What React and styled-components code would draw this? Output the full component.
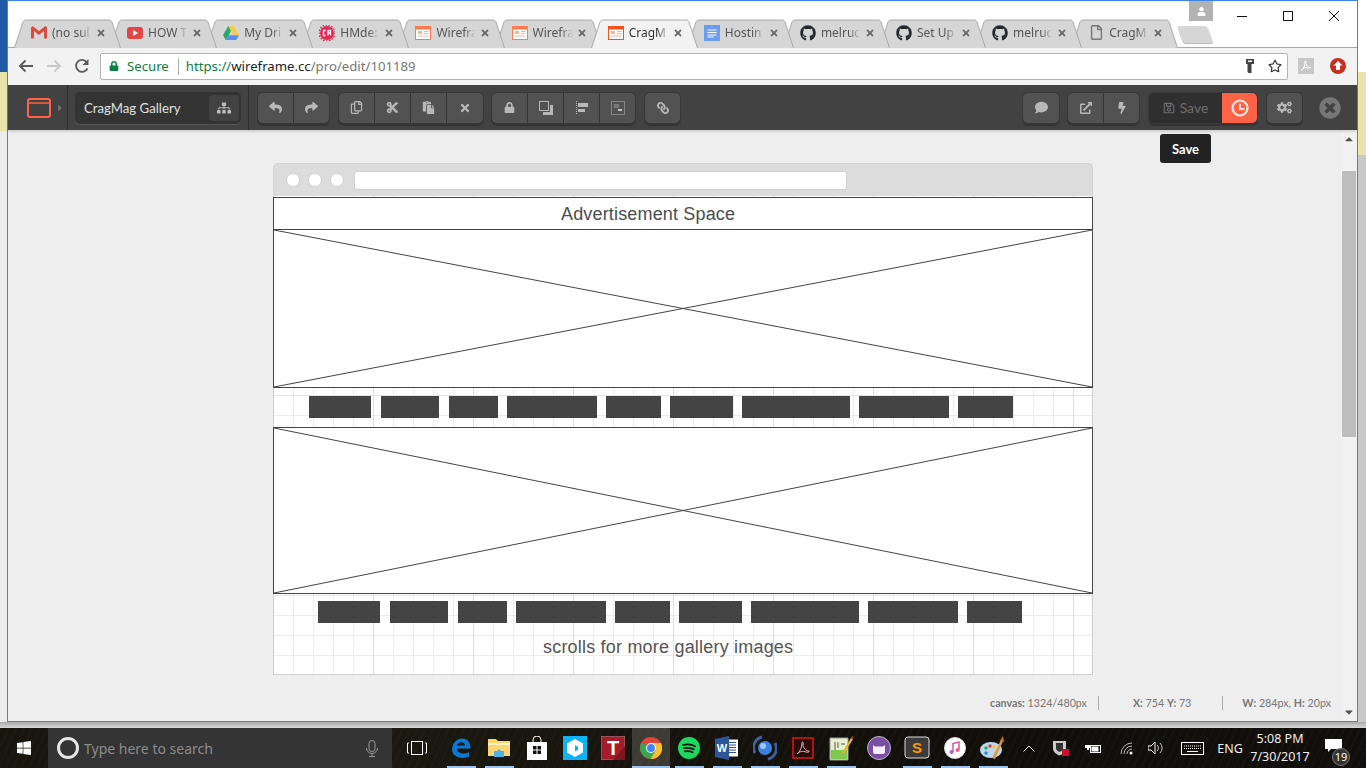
import React from 'react';
import styled, { createGlobalStyle } from 'styled-components';
import {
  FaReply, FaShare, FaRegCopy, FaCut, FaPaste, FaTimes, FaLock, FaLink, FaComment,
  FaExternalLinkAlt, FaBolt, FaRegSave, FaCogs, FaTimesCircle, FaSitemap,
  FaGithub, FaRegFile, FaRegStar, FaUser, FaWindows, FaCaretRight,
  FaCaretUp, FaCaretDown,
} from 'react-icons/fa';

const GlobalStyle = createGlobalStyle`
  html, body { margin: 0; padding: 0; width: 1366px; height: 768px; overflow: hidden; }
  body { font-family: "Noto Sans", "Liberation Sans", sans-serif; }
  * { box-sizing: border-box; }
`;

const Desktop = styled.div`
  width: 1366px;
  height: 768px;
  display: flex;
  flex-direction: column;
  background:
    linear-gradient(#2059a5 0 72px, #e8e4aa 72px 131px, #ececec 131px) left top / 7px 100% no-repeat,
    linear-gradient(#ffffff 0 72px, #e8e4aa 72px 155px, #c8c8c8 155px) right top / 8px 100% no-repeat,
    #ececec;
`;

const Window = styled.div`
  margin-left: 7px;
  width: 1351px;
  height: 722px;
  flex: none;
  display: flex;
  flex-direction: column;
  border: 1px solid #3b84e6;
  background: #fff;
`;

const Shade = styled.div`
  height: 6px;
  flex: none;
  background: linear-gradient(#a9a9a9, #d8d8d8);
`;

/* browser chrome */
const TabStrip = styled.div`
  position: relative;
  height: 47px;
  flex: none;
  background: #fff;
  border-bottom: 1px solid #a9a9a9;
  padding: 18px 0 0 6px;
  display: flex;
`;

const TabWrap = styled.div`
  position: relative;
  flex: none;
  width: 106px;
  height: 29px;
  margin-right: -9.9px;
  padding: 0 0 2px 17px;
  display: flex;
  align-items: center;
  z-index: ${(p) => p.$z};
  font-size: 12px;
  color: ${(p) => (p.$active ? '#333' : '#555')};
`;

const TabShape = styled.svg`
  position: absolute;
  left: 0;
  top: 0;
  width: 110px;
  height: 30px;
  z-index: -1;
`;

const Favicon = styled.span`
  flex: none;
  width: 16px;
  height: 16px;
  display: flex;
  align-items: center;
  justify-content: center;
  color: #24292e;
`;

const TabTitle = styled.span`
  flex: none;
  width: 40px;
  margin-left: 5px;
  overflow: hidden;
  white-space: nowrap;
  -webkit-mask-image: linear-gradient(90deg, #000 70%, transparent);
  mask-image: linear-gradient(90deg, #000 70%, transparent);
`;

const TabClose = styled.span`
  flex: none;
  margin-left: 4px;
  display: flex;
  color: #666;
`;

const NewTab = styled.div`
  flex: none;
  width: 30px;
  height: 17px;
  margin: 7px 0 0 13px;
  background: #d6d6d6;
  border-radius: 2px;
  transform: skewX(20deg);
  box-shadow: 0 1px 0 #bbb;
`;

const Caption = styled.div`
  position: absolute;
  right: 0;
  top: 0;
  display: flex;
`;

const ProfileBadge = styled.div`
  width: 24px;
  height: 20px;
  margin-right: 6px;
  background: #b2b2b2;
  color: #fff;
  display: flex;
  align-items: center;
  justify-content: center;
`;

const CaptionBtn = styled.div`
  width: 46px;
  height: 30px;
  display: flex;
  align-items: center;
  justify-content: center;
`;

const Omnibar = styled.div`
  height: 37px;
  flex: none;
  background: #f2f2f2;
  display: flex;
  align-items: center;
  padding: 0 0 1px 4px;
`;

const NavBtn = styled.span`
  flex: none;
  width: 28px;
  display: flex;
  justify-content: center;
`;

const Address = styled.div`
  flex: none;
  width: 1188px;
  height: 27px;
  margin: 0 2px 0 4px;
  background: #fff;
  border: 1px solid #b4b4b4;
  border-radius: 2px;
  display: flex;
  align-items: center;
  padding: 0 5px 0 8px;
  font-size: 13.2px;
`;

const Secure = styled.span`
  color: #0b8043;
  margin-left: 8px;
  padding-right: 9px;
  border-right: 1px solid #aaa;
  line-height: 17px;
`;

const Url = styled.span`
  margin-left: 7px;
  color: #777;
  b { font-weight: 400; color: #222; }
  i { font-style: normal; color: #0b8043; }
`;

const AddressEnd = styled.span`
  margin-left: auto;
  display: flex;
  align-items: center;
  gap: 14px;
`;

const ExtBtn = styled.span`
  flex: none;
  width: 32px;
  display: flex;
  justify-content: center;
`;

/* wireframe.cc toolbar */
const EditorBar = styled.div`
  height: 45px;
  flex: none;
  background: #424242;
  box-shadow: 0 2px 2px rgba(0, 0, 0, 0.12);
  position: relative;
  z-index: 2;
  display: flex;
  align-items: center;
  font-family: Lato, "Noto Sans", sans-serif;
`;

const LogoCell = styled.div`
  width: 60px;
  height: 100%;
  flex: none;
  border-right: 1px solid #2e2e2e;
  display: flex;
  align-items: center;
  padding-left: 19px;
  gap: 4px;
  color: #777;
`;

const LogoMark = styled.svg`
  flex: none;
`;

const TitleCell = styled.div`
  width: 181px;
  height: 100%;
  flex: none;
  border-right: 1px solid #2e2e2e;
  padding: 7px 7px;
  margin-right: 9px;
`;

const TitleBox = styled.div`
  height: 32px;
  background: #333;
  border-radius: 5px;
  box-shadow: 0 1px 0 #555;
  display: flex;
  align-items: center;
  justify-content: space-between;
  padding: 0 2px 0 9px;
  color: #e0e0e0;
  font-size: 13.2px;
`;

const MiniBtn = styled.span`
  width: 30px;
  height: 26px;
  background: #424242;
  border-radius: 4px;
  color: #bbb;
  display: flex;
  align-items: center;
  justify-content: center;
`;

const Group = styled.div`
  display: flex;
  flex: none;
  margin-right: ${(p) => p.$gap ?? 10}px;
  border-radius: 5px;
  overflow: hidden;
  height: 30px;
  box-shadow: 0 0 0 1px #383838, 0 2px 0 1px #353535;
`;

const Btn = styled.span`
  width: ${(p) => p.$w || 36}px;
  height: 100%;
  background: #525252;
  border-right: 1px solid #353535;
  color: #b8b8b8;
  display: flex;
  align-items: center;
  justify-content: center;
  &:last-child { border-right: 0; }
`;

const ChainIcon = styled(FaLink)`
  transform: scaleX(-1);
`;

const RightTools = styled.div`
  margin-left: auto;
  display: flex;
  align-items: center;
`;

const SaveBtn = styled.span`
  width: 73px;
  height: 100%;
  background: #2f2f2f;
  color: #6e6e6e;
  font-size: 14px;
  display: flex;
  align-items: center;
  justify-content: center;
  gap: 5px;
`;

const ClockBtn = styled.span`
  width: 35px;
  height: 100%;
  background: #ff6347;
  display: flex;
  align-items: center;
  justify-content: center;
`;

const CloseEditor = styled.span`
  width: 22px;
  height: 22px;
  margin: 0 16px 0 17px;
  color: #777;
  display: flex;
  align-items: center;
  justify-content: center;
`;

const Tooltip = styled.div`
  position: absolute;
  left: 1152px;
  top: 4px;
  width: 51px;
  height: 29px;
  background: #222;
  color: #fff;
  border-radius: 3px;
  font: 700 13px Lato, sans-serif;
  display: flex;
  align-items: center;
  justify-content: center;
`;

/* canvas */
const Workspace = styled.div`
  position: relative;
  flex: 1;
  min-height: 0;
  display: flex;
  background: #eee;
`;

const CanvasArea = styled.div`
  flex: 1;
  display: flex;
  flex-direction: column;
  padding: 33px 0 0 265px;
`;

const Mock = styled.div`
  width: 820px;
  flex: none;
`;

const BrowserBar = styled.div`
  height: 33px;
  background: #dcdcdc;
  border: 1px solid #d2d2d2;
  border-bottom: 0;
  border-radius: 5px 5px 0 0;
  display: flex;
  align-items: center;
  padding: 0 0 0 12px;
`;

const Dot = styled.span`
  width: 14px;
  height: 14px;
  margin-right: 8px;
  border-radius: 50%;
  background: #fff;
  border: 1px solid #d0d0d0;
`;

const MockUrl = styled.span`
  width: 493px;
  height: 19px;
  margin-left: 2px;
  background: #fff;
  border: 1px solid #d0d0d0;
  border-radius: 3px;
`;

const Paper = styled.div`
  height: 479px;
  border: 1px solid #cfcfcf;
  border-top: 0;
  background-color: #fff;
  background-image:
    linear-gradient(90deg, transparent 99px, #dedede 99px),
    linear-gradient(transparent 99px, #e4e4e4 99px),
    linear-gradient(90deg, transparent 19px, #ececec 19px),
    linear-gradient(transparent 19px, #ececec 19px);
  background-size: 100px 100px, 100px 100px, 20px 20px, 20px 20px;
  display: flex;
  flex-direction: column;
`;

const AdBanner = styled.div`
  height: 33px;
  margin: 1px -1px 0;
  background: #fff;
  border: 1px solid #444;
  padding-left: 287px;
  font: 18px/32px "Liberation Sans", Arial, sans-serif;
  letter-spacing: 0.16px;
  color: #4c4c4c;
`;

const Placeholder = styled.div`
  height: ${(p) => p.$h}px;
  margin: ${(p) => (p.$flush ? '-1px' : '0')} -1px 0;
  background: #fff;
  border: 1px solid #444;
  flex: none;
  svg { display: block; width: 100%; height: 100%; }
`;

const NavRow = styled.div`
  height: 39px;
  flex: none;
  display: flex;
  align-items: flex-start;
  padding: ${(p) => p.$top}px 0 0 ${(p) => p.$left}px;
`;

const NavItem = styled.span`
  height: 22px;
  flex: none;
  background: #444;
  width: ${(p) => p.$w}px;
  margin-right: ${(p) => p.$gap}px;
`;

const ScrollNote = styled.div`
  font: 18px "Liberation Sans", Arial, sans-serif;
  letter-spacing: 0.2px;
  color: #555;
  padding-left: 269px;
  margin-top: 4px;
`;

const StatusBar = styled.div`
  margin: 21px 0 0 -265px;
  padding-right: 10px;
  display: flex;
  justify-content: flex-end;
  align-items: center;
  font: 10.7px Lato, "Noto Sans", sans-serif;
  color: #777;
  b { font-weight: 700; }
`;

const StatusCell = styled.span`
  padding-left: ${(p) => p.$pl}px;
  padding-right: ${(p) => p.$pr}px;
  border-right: ${(p) => (p.$end ? '0' : '1px solid #aaa')};
  line-height: 14px;
`;

const ScrollBar = styled.div`
  width: 16px;
  flex: none;
  background: #f1f1f1;
  color: #505050;
  display: flex;
  flex-direction: column;
  align-items: center;
  justify-content: space-between;
  padding: 3px 0;
  position: relative;
`;

const Thumb = styled.div`
  position: absolute;
  left: 1px;
  top: 41px;
  width: 14px;
  height: 266px;
  background: #bdbdbd;
`;

/* taskbar */
const Taskbar = styled.div`
  height: 40px;
  flex: none;
  display: flex;
  align-items: stretch;
  color: #fff;
  background:
    repeating-linear-gradient(115deg, rgba(90, 80, 50, 0.07) 0 2px, transparent 2px 7px),
    radial-gradient(circle at 20% 60%, #1d1a0f, transparent 60%),
    #110f0b;
`;

const StartBtn = styled.div`
  width: 48px;
  flex: none;
  display: flex;
  align-items: center;
  justify-content: center;
`;

const SearchBox = styled.div`
  width: 344px;
  flex: none;
  background: #343434;
  display: flex;
  align-items: center;
  padding: 0 14px 0 9px;
  color: #8c8c8c;
  font-size: 14px;
`;

const Cortana = styled.span`
  width: 22px;
  height: 22px;
  border-radius: 50%;
  border: 3px solid #e6e6e6;
  margin-right: 5px;
  flex: none;
`;

const MicIcon = styled.svg`
  margin-left: auto;
`;

const TaskView = styled.div`
  width: 50px;
  flex: none;
  display: flex;
  align-items: center;
  justify-content: center;
`;

const AppSlot = styled.div`
  width: 38px;
  flex: none;
  position: relative;
  display: flex;
  align-items: center;
  justify-content: center;
  background: ${(p) => (p.$focused ? 'rgba(255,255,255,0.17)' : 'transparent')};
  &::after {
    content: '';
    display: ${(p) => (p.$running ? 'block' : 'none')};
    position: absolute;
    bottom: 0;
    left: ${(p) => (p.$focused ? '0' : '5px')};
    right: ${(p) => (p.$focused ? '0' : '4px')};
    height: 2px;
    background: #9cc4ee;
  }
`;

const Tray = styled.div`
  display: flex;
  margin-left: -2px;
`;

const TraySlot = styled.div`
  width: ${(p) => p.$w}px;
  flex: none;
  display: flex;
  align-items: center;
  justify-content: center;
  font-size: 12.5px;
  color: #eee;
`;

const Clock = styled.div`
  width: 68px;
  flex: none;
  font-size: 12.5px;
  line-height: 18px;
  text-align: center;
  padding-top: 2px;
  color: #eee;
`;

const NotifyWrap = styled.div`
  width: 38px;
  flex: none;
  position: relative;
  display: flex;
  align-items: center;
  justify-content: center;
`;

const NotifyBubble = styled.svg`
  margin-top: -4px;
`;

const NotifyCount = styled.span`
  position: absolute;
  left: 18px;
  top: 20px;
  width: 18px;
  height: 18px;
  border-radius: 50%;
  background: #333;
  border: 1px solid #777;
  font-size: 11px;
  line-height: 16px;
  text-align: center;
  color: #fff;
`;

const GmailIcon = () => (
  <svg width="16" height="13" viewBox="0 0 16 13">
    <path d="M0 1.500v11h3V5l5 4 5-4v7.500h3v-11L14.500 0 8 5 1.500 0z" fill="#db4c3f" />
  </svg>
);

const YouTubeIcon = () => (
  <svg width="16" height="12" viewBox="0 0 16 12">
    <rect width="16" height="12" rx="3" fill="#e04646" />
    <path d="M6 3l5 3-5 3z" fill="#fff" />
  </svg>
);

const DriveIcon = () => (
  <svg width="16" height="14" viewBox="0 0 16 14">
    <path d="M5.300 0h5.400l5.300 9h-5.400z" fill="#f7cc45" />
    <path d="M5.300 0L0 9l2.700 5 5.300-9z" fill="#2aa866" />
    <path d="M5 9.300h11L13.300 14H2.700z" fill="#5b8def" />
  </svg>
);

const BurstIcon = () => (
  <svg width="16" height="16" viewBox="0 0 16 16">
    <circle cx="8" cy="8" r="7" fill="#e2264f" />
    <circle cx="8" cy="8" r="8" fill="none" stroke="#e2264f" strokeWidth="1.500" strokeDasharray="1.500 1.500" />
    <path d="M6.800 5.500H4.500v5h2.300M9 10.500V5.500h2.500v5M9 8h2.500" fill="none" stroke="#fff" strokeWidth="1.300" />
  </svg>
);

const WireframeIcon = ({ strong }) => (
  <svg width="16" height="14" viewBox="0 0 16 14">
    <rect x=".5" y=".5" width="15" height="13" fill="#fff" stroke={strong ? '#f4511e' : '#ff7a4d'} />
    <rect x="1" y="1" width="14" height="2.500" fill={strong ? '#f4511e' : '#ff7a4d'} />
    <rect x="3" y="5" width="4" height="3" fill="#ffb299" />
    <path d="M9 5.500h4.500M9 7.500h4.500M3 10h10.500" stroke="#ffb299" />
  </svg>
);

const DocsIcon = () => (
  <svg width="16" height="16" viewBox="0 0 16 16">
    <rect width="16" height="16" fill="#6a9cf2" />
    <path d="M3.500 5h9M3.500 7.500h9M3.500 10h9M3.500 12h6" stroke="#fff" />
  </svg>
);

const closeX = <FaTimes size={10} />;

const tabs = [
  { icon: <GmailIcon />, title: '(no sul' },
  { icon: <YouTubeIcon />, title: 'HOW T' },
  { icon: <DriveIcon />, title: 'My Dri' },
  { icon: <BurstIcon />, title: 'HMde:' },
  { icon: <WireframeIcon />, title: 'Wirefra' },
  { icon: <WireframeIcon />, title: 'Wirefra' },
  { icon: <WireframeIcon strong />, title: 'CragM', active: true },
  { icon: <DocsIcon />, title: 'Hostin' },
  { icon: <FaGithub size={16} />, title: 'melruc' },
  { icon: <FaGithub size={16} />, title: 'Set Up' },
  { icon: <FaGithub size={16} />, title: 'melruc' },
  { icon: <FaRegFile size={15} color="#777" />, title: 'CragM' },
];

const ArrangeIcon = ({ kind }) => {
  if (kind === 'front') {
    return (
      <svg width="14" height="14" viewBox="0 0 14 14">
        <rect x=".5" y=".5" width="9" height="9" fill="none" stroke="#b8b8b8" />
        <path d="M11 4h3v10H4v-3h7z" fill="#b8b8b8" />
      </svg>
    );
  }
  if (kind === 'align') {
    return (
      <svg width="12" height="14" viewBox="0 0 12 14">
        <path d="M.5 0v14" stroke="#b8b8b8" strokeDasharray="1 1" />
        <rect x="2" y="2" width="10" height="4" fill="#b8b8b8" />
        <rect x="2" y="8" width="7" height="3" fill="#b8b8b8" />
      </svg>
    );
  }
  return (
    <svg width="14" height="14" viewBox="0 0 14 14">
      <rect x=".5" y=".5" width="13" height="13" fill="none" stroke="#b8b8b8" strokeDasharray="1 1" />
      <rect x="3" y="3" width="5" height="4" fill="#7a7a7a" />
      <rect x="7" y="8" width="4" height="2" fill="#c4c4c4" />
    </svg>
  );
};

const CrossedBox = () => (
  <svg viewBox="0 0 100 100" preserveAspectRatio="none">
    <path d="M0 0L100 100M100 0L0 100" stroke="#444" strokeWidth="1" vectorEffect="non-scaling-stroke" fill="none" />
  </svg>
);

const navItems = [
  { w: 62, gap: 10 }, { w: 58, gap: 10 }, { w: 49, gap: 9 }, { w: 90, gap: 9 }, { w: 55, gap: 9 },
  { w: 63, gap: 9 }, { w: 108, gap: 9 }, { w: 90, gap: 9 }, { w: 55, gap: 0 },
];

const EdgeIcon = () => (
  <svg width="22" height="22" viewBox="0 0 22 22">
    <path d="M2 13C2 5 8 1.500 12 1.500c5.500 0 8.500 4 8.500 10H7c0 5 7 6.500 12 3.500v4.500c-6 3-16 1.500-17-6.500zM7 8.500h8C15 4 8 4 7 8.500z" fill="#0a78d7" />
  </svg>
);

const ExplorerIcon = () => (
  <svg width="22" height="20" viewBox="0 0 22 20">
    <path d="M0 1h8l2 2h12v15H0z" fill="#fbd774" />
    <path d="M0 5h22v2H0z" fill="#fff3c4" />
    <path d="M6 19v-6h3l2-2 2 2h3v6z" fill="#4fb3e8" />
  </svg>
);

const StoreIcon = () => (
  <svg width="22" height="24" viewBox="0 0 22 24">
    <path d="M7 6V4a4 4 0 018 0v2" fill="none" stroke="#fff" />
    <path d="M1 6h20v18H1z" fill="#fff" />
    <path d="M7 10h3.500v3.500H7zM11.500 10H15v3.500h-3.500zM7 14.500h3.500V18H7zM11.500 14.500H15V18h-3.500z" fill="#111" />
  </svg>
);

const BoxIcon = () => (
  <svg width="24" height="24" viewBox="0 0 24 24">
    <rect width="24" height="24" fill="#0db3f3" />
    <path d="M12 3l8 4.500v9L12 21l-8-4.500v-9z" fill="#fff" />
    <path d="M12 9l3 1.700v3L12 15.500z" fill="#0db3f3" />
  </svg>
);

const LetterT = () => (
  <svg width="24" height="24" viewBox="0 0 24 24">
    <rect width="24" height="24" fill="#a51d2d" stroke="#888" />
    <path d="M24 10v14H12z" fill="#7c1622" />
    <text x="12" y="19" textAnchor="middle" fontSize="20" fontWeight="700" fontFamily="Liberation Sans" fill="#fff">T</text>
  </svg>
);

const ChromeIcon = () => (
  <svg width="22" height="22" viewBox="0 0 22 22">
    <circle cx="11" cy="11" r="11" fill="#e0453a" />
    <path d="M11 11L1.500 5.500A11 11 0 000 11a11 11 0 0010.500 11L16 13z" fill="#34a853" />
    <path d="M11 6h10a11 11 0 01-10.500 16L16 13z" fill="#fbc02d" />
    <circle cx="11" cy="11" r="5" fill="#fff" />
    <circle cx="11" cy="11" r="4" fill="#4285f4" />
  </svg>
);

const SpotifyIcon = () => (
  <svg width="22" height="22" viewBox="0 0 22 22">
    <circle cx="11" cy="11" r="11" fill="#1ed760" />
    <path d="M5 8c4-1 8.500-.8 12 1.300M6 11.300c3.500-.9 7-.6 10 1.100M6.800 14.400c2.800-.7 5.400-.4 7.800.9" fill="none" stroke="#111" strokeWidth="1.700" strokeLinecap="round" />
  </svg>
);

const WordIcon = () => (
  <svg width="24" height="24" viewBox="0 0 24 24">
    <rect x="10" y="3.500" width="13" height="17" fill="#fff" />
    <path d="M13 6.500h8M13 9h8M13 11.500h8M13 14h8M13 16.500h8" stroke="#2b579a" />
    <path d="M0 3l14-3v24L0 21z" fill="#2b579a" />
    <text x="7" y="16" textAnchor="middle" fontSize="11" fontWeight="700" fontFamily="Liberation Sans" fill="#fff">W</text>
  </svg>
);

const GlobeIcon = () => (
  <svg width="24" height="26" viewBox="0 0 24 26">
    <circle cx="12" cy="13" r="7" fill="#3b82dc" />
    <circle cx="10" cy="11" r="3" fill="#9cc8f5" />
    <path d="M9 2A11 11 0 002 18M15 24A11 11 0 0022 8" fill="none" stroke="#3f5f9e" strokeWidth="3" />
  </svg>
);

const AcrobatIcon = () => (
  <svg width="22" height="22" viewBox="0 0 22 22">
    <rect x="1" y="1" width="20" height="20" fill="#2a0a0a" stroke="#d41c10" strokeWidth="1.500" />
    <path d="M5 17c3-2 5-7 5-11 0-2 2-1 1 2 0 3 3 6 6 6 1 1-1 1.500-3 1-3-1-6-1-9 2z" fill="none" stroke="#dcb8b8" />
  </svg>
);

const NotepadIcon = () => (
  <svg width="24" height="26" viewBox="0 0 24 26">
    <path d="M1 3h18v22H1z" fill="#e8f0d0" stroke="#999" />
    <path d="M2 15h16v9H2z" fill="#7ec850" />
    <path d="M6 7v8M9 7v6M12 9h4" stroke="#555" />
    <path d="M12 19L22 3l2 1-9 15z" fill="#e8b030" />
    <path d="M22 3l2 1 .5-2-1.500-1z" fill="#d03030" />
  </svg>
);

const GitKrakenIcon = () => (
  <svg width="24" height="24" viewBox="0 0 24 24">
    <circle cx="12" cy="12" r="11.500" fill="#7a4fa3" stroke="#bbb" />
    <path d="M6 9l2 1.500h8L18 9v7a2 2 0 01-2 2H8a2 2 0 01-2-2z" fill="#f3eef8" />
  </svg>
);

const SublimeIcon = () => (
  <svg width="26" height="24" viewBox="0 0 26 24">
    <rect x="1" y="1" width="24" height="21" rx="3" fill="#3c3c3c" stroke="#ddd" />
    <text x="13" y="17" textAnchor="middle" fontSize="15" fontWeight="700" fontFamily="Liberation Sans" fill="#ff9800">S</text>
  </svg>
);

const ITunesIcon = () => (
  <svg width="22" height="22" viewBox="0 0 22 22">
    <circle cx="11" cy="11" r="10.500" fill="#fff" stroke="#ddd" />
    <path d="M9 15V6.500l6-1.500v8" fill="none" stroke="#e0509b" strokeWidth="1.500" />
    <circle cx="7.500" cy="15" r="2" fill="#b05ee0" />
    <circle cx="13.500" cy="13" r="2" fill="#ec5f8f" />
  </svg>
);

const PaintIcon = () => (
  <svg width="26" height="26" viewBox="0 0 26 26">
    <ellipse cx="11" cy="15" rx="11" ry="8" fill="#bcd7ee" />
    <circle cx="6" cy="13" r="1.700" fill="#39a845" />
    <circle cx="10" cy="11" r="1.700" fill="#e53935" />
    <circle cx="14" cy="12" r="1.700" fill="#fbc02d" />
    <circle cx="6" cy="18" r="1.700" fill="#1e88e5" />
    <path d="M12 23L21 5l2 1-8 18z" fill="#e39b3a" />
    <path d="M20 6l3-5 1 6z" fill="#c57d27" />
  </svg>
);

const apps = [
  { key: 'edge', icon: <EdgeIcon />, running: true },
  { key: 'explorer', icon: <ExplorerIcon />, running: true },
  { key: 'store', icon: <StoreIcon /> },
  { key: 'box', icon: <BoxIcon /> },
  { key: 't', icon: <LetterT /> },
  { key: 'chrome', icon: <ChromeIcon />, running: true, focused: true },
  { key: 'spotify', icon: <SpotifyIcon />, running: true },
  { key: 'word', icon: <WordIcon />, running: true },
  { key: 'globe', icon: <GlobeIcon />, running: true },
  { key: 'acrobat', icon: <AcrobatIcon />, running: true },
  { key: 'notepad', icon: <NotepadIcon />, running: true },
  { key: 'kraken', icon: <GitKrakenIcon /> },
  { key: 'sublime', icon: <SublimeIcon />, running: true },
  { key: 'itunes', icon: <ITunesIcon />, running: true },
  { key: 'paint', icon: <PaintIcon />, running: true },
];

const App = () => (
  <Desktop>
    <GlobalStyle />
    <Window>
      <TabStrip>
        {tabs.map((tab, i) => (
          <TabWrap key={i} $active={tab.active} $z={tab.active ? 30 : 20 - i}>
            <TabShape viewBox="0 0 110 30">
              <path
                d="M0.500 29 L9 3 Q10 1 12 1 L95 1 Q97 1 98 3 L106.500 29"
                fill={tab.active ? '#f2f2f2' : '#d6d6d6'}
                stroke="#a9a9a9"
              />
            </TabShape>
            <Favicon>{tab.icon}</Favicon>
            <TabTitle>{tab.title}</TabTitle>
            <TabClose>{closeX}</TabClose>
          </TabWrap>
        ))}
        <NewTab />
        <Caption>
          <ProfileBadge><FaUser size={9} /></ProfileBadge>
          <CaptionBtn>
            <svg width="10" height="10" viewBox="0 0 10 10"><path d="M0 5.500h10" stroke="#111" /></svg>
          </CaptionBtn>
          <CaptionBtn>
            <svg width="10" height="10" viewBox="0 0 10 10"><rect x=".5" y=".5" width="9" height="9" fill="none" stroke="#111" /></svg>
          </CaptionBtn>
          <CaptionBtn>
            <svg width="10" height="10" viewBox="0 0 10 10"><path d="M0 0l10 10M10 0L0 10" stroke="#111" /></svg>
          </CaptionBtn>
        </Caption>
      </TabStrip>
      <Omnibar>
        <NavBtn>
          <svg width="16" height="14" viewBox="0 0 16 14"><path d="M15 7H2M7.500 1.500L2 7l5.500 5.500" fill="none" stroke="#5a5a5a" strokeWidth="1.800" /></svg>
        </NavBtn>
        <NavBtn>
          <svg width="16" height="14" viewBox="0 0 16 14"><path d="M1 7h13M8.500 1.500L14 7l-5.500 5.500" fill="none" stroke="#c8c8c8" strokeWidth="1.800" /></svg>
        </NavBtn>
        <NavBtn>
          <svg width="16" height="16" viewBox="0 0 16 16"><path d="M13.500 10.500A6 6 0 1113 4.500" fill="none" stroke="#5a5a5a" strokeWidth="1.800" /><path d="M14.500 1v6h-6z" fill="#5a5a5a" /></svg>
        </NavBtn>
        <Address>
          <FaLock size={10} color="#0b8043" />
          <Secure>Secure</Secure>
          <Url><i>https://</i><b>wireframe.cc</b>/pro/edit/101189</Url>
          <AddressEnd>
            <svg width="8" height="14" viewBox="0 0 8 14">
              <path d="M0 0h8v5H5.500v9h-3l-1-1V5H0z" fill="#444" />
              <rect x="2" y="1.500" width="4" height="1.500" fill="#fff" />
            </svg>
            <FaRegStar size={14} color="#333" />
          </AddressEnd>
        </Address>
        <ExtBtn>
          <svg width="16" height="16" viewBox="0 0 16 16"><rect width="16" height="16" fill="#c8c8c8" /><path d="M3 13c3-2 4-6 4-9 0-2 1.500-1 1 1.500 0 2.500 2 4 5 4-1 1-3 .5-5 0-2 .5-3.500 1.500-5 3.500z" fill="none" stroke="#fff" /></svg>
        </ExtBtn>
        <ExtBtn>
          <svg width="16" height="16" viewBox="0 0 16 16"><circle cx="8" cy="8" r="8" fill="#c5311e" /><path d="M8 3l4.500 4.500H10V12H6V7.500H3.500z" fill="#fff" /></svg>
        </ExtBtn>
      </Omnibar>
      <EditorBar>
        <LogoCell>
          <LogoMark width="24" height="20" viewBox="0 0 24 20">
            <rect x="1" y="1" width="22" height="18" rx="2" fill="none" stroke="#ff6347" strokeWidth="2" />
            <path d="M1 5h22" stroke="#ff6347" strokeWidth="1.500" />
          </LogoMark>
          <FaCaretRight size={10} />
        </LogoCell>
        <TitleCell>
          <TitleBox>
            CragMag Gallery
            <MiniBtn><FaSitemap size={14} /></MiniBtn>
          </TitleBox>
        </TitleCell>
        <Group><Btn><FaReply size={13} /></Btn><Btn $w={35}><FaShare size={13} /></Btn></Group>
        <Group $gap={9}>
          <Btn><FaRegCopy size={13} /></Btn><Btn><FaCut size={13} /></Btn><Btn><FaPaste size={13} /></Btn><Btn><FaTimes size={12} /></Btn>
        </Group>
        <Group>
          <Btn><FaLock size={11} /></Btn><Btn><ArrangeIcon kind="front" /></Btn><Btn><ArrangeIcon kind="align" /></Btn><Btn $w={35}><ArrangeIcon kind="group" /></Btn>
        </Group>
        <Group><Btn $w={35}><ChainIcon size={12} /></Btn></Group>
        <RightTools>
          <Group $gap={9}><Btn><FaComment size={13} /></Btn></Group>
          <Group><Btn><FaExternalLinkAlt size={12} /></Btn><Btn $w={35}><FaBolt size={12} /></Btn></Group>
          <Group>
            <SaveBtn><FaRegSave size={12} />Save</SaveBtn>
            <ClockBtn>
              <svg width="18" height="18" viewBox="0 0 18 18">
                <circle cx="9" cy="9" r="7.500" fill="none" stroke="#fbe6e0" strokeWidth="2.200" />
                <path d="M9 4.500V10H13.500" fill="none" stroke="#fbe6e0" strokeWidth="2" />
              </svg>
            </ClockBtn>
          </Group>
          <Group $gap={0}><Btn $w={35}><FaCogs size={15} /></Btn></Group>
          <CloseEditor><FaTimesCircle size={22} /></CloseEditor>
        </RightTools>
      </EditorBar>
      <Workspace>
        <Tooltip>Save</Tooltip>
        <CanvasArea>
          <Mock>
            <BrowserBar>
              <Dot /><Dot /><Dot />
              <MockUrl />
            </BrowserBar>
            <Paper>
              <AdBanner>Advertisement Space</AdBanner>
              <Placeholder $h={159} $flush><CrossedBox /></Placeholder>
              <NavRow $top={8} $left={35}>
                {navItems.map((item, i) => <NavItem key={i} $w={item.w} $gap={item.gap} />)}
              </NavRow>
              <Placeholder $h={167}><CrossedBox /></Placeholder>
              <NavRow $top={7} $left={44}>
                {navItems.map((item, i) => <NavItem key={i} $w={item.w} $gap={item.gap} />)}
              </NavRow>
              <ScrollNote>scrolls for more gallery images</ScrollNote>
            </Paper>
          </Mock>
          <StatusBar>
            <StatusCell $pr={11}><b>canvas:</b> 1324/480px</StatusCell>
            <StatusCell $pl={34} $pr={31}><b>X:</b> 754 <b>Y:</b> 73</StatusCell>
            <StatusCell $pl={19} $end><b>W:</b> 284px, <b>H:</b> 20px</StatusCell>
          </StatusBar>
        </CanvasArea>
        <ScrollBar>
          <FaCaretUp size={12} />
          <Thumb />
          <FaCaretDown size={12} />
        </ScrollBar>
      </Workspace>
    </Window>
    <Shade />
    <Taskbar>
      <StartBtn><FaWindows size={16} /></StartBtn>
      <SearchBox>
        <Cortana />
        Type here to search
        <MicIcon width="12" height="17" viewBox="0 0 12 17">
          <rect x="3" y=".5" width="6" height="11" rx="3" fill="none" stroke="#999" />
          <path d="M.5 8a5.500 5.500 0 0011 0M6 13.500V16.500M3 16.500h6" fill="none" stroke="#999" />
        </MicIcon>
      </SearchBox>
      <TaskView>
        <svg width="20" height="14" viewBox="0 0 20 14">
          <rect x="4.500" y=".5" width="11" height="13" fill="none" stroke="#fff" />
          <path d="M2 2H.5v10H2M18 2h1.500v10H18" fill="none" stroke="#fff" />
        </svg>
      </TaskView>
      {apps.map((app) => (
        <AppSlot key={app.key} $running={app.running} $focused={app.focused}>{app.icon}</AppSlot>
      ))}
      <Tray>
        <TraySlot $w={38}>
          <svg width="12" height="7" viewBox="0 0 12 7"><path d="M.5 6.500L6 1l5.500 5.500" fill="none" stroke="#eee" /></svg>
        </TraySlot>
        <TraySlot $w={26}>
          <svg width="16" height="16" viewBox="0 0 16 16">
            <path d="M0 1h13v7c0 4-3 6-6.500 7.500C3 14 0 12 0 8z" fill="#ccc" />
            <path d="M3 3h7v5c0 2-1.500 3-3.500 4C4.500 11 3 10 3 8z" fill="#333" />
            <rect x="9" y="9" width="7" height="7" fill="#c8102e" />
          </svg>
        </TraySlot>
        <TraySlot $w={38}>
          <svg width="16" height="12" viewBox="0 0 16 12">
            <path d="M2 0v3M4 0v3M0 3h6v3H4v2H2V6H0z" fill="#fff" />
            <rect x="5.500" y="3.500" width="10" height="7" fill="none" stroke="#fff" />
            <rect x="6.500" y="4.500" width="7" height="5" fill="#fff" />
          </svg>
        </TraySlot>
        <TraySlot $w={30}>
          <svg width="14" height="14" viewBox="0 0 14 14">
            <path d="M1 13a11 11 0 0111-11M4 13a8 8 0 018-8M7 13a5 5 0 015-5" fill="none" stroke="#bbb" />
            <circle cx="11" cy="12" r="1.500" fill="#fff" />
          </svg>
        </TraySlot>
        <TraySlot $w={28}>
          <svg width="16" height="12" viewBox="0 0 16 12">
            <path d="M0 4h3l4-4v12L3 8H0z" fill="none" stroke="#fff" />
            <path d="M9 3a4 4 0 010 6M12 1a7 7 0 010 10" fill="none" stroke="#ccc" />
          </svg>
        </TraySlot>
        <TraySlot $w={44}>
          <svg width="23" height="13" viewBox="0 0 23 13">
            <rect x=".5" y=".5" width="22" height="12" fill="none" stroke="#fff" />
            <path d="M3 4h17M3 6.500h17" stroke="#fff" strokeDasharray="1 1" />
            <path d="M6 9.500h11" stroke="#fff" />
          </svg>
        </TraySlot>
        <TraySlot $w={32}>ENG</TraySlot>
        <Clock>5:08 PM<br />7/30/2017</Clock>
        <NotifyWrap>
          <NotifyBubble width="17" height="14" viewBox="0 0 17 14">
            <path d="M0 0h17v10H6l-3 3v-3H0z" fill="#fff" />
          </NotifyBubble>
          <NotifyCount>19</NotifyCount>
        </NotifyWrap>
      </Tray>
    </Taskbar>
  </Desktop>
);

export default App;
